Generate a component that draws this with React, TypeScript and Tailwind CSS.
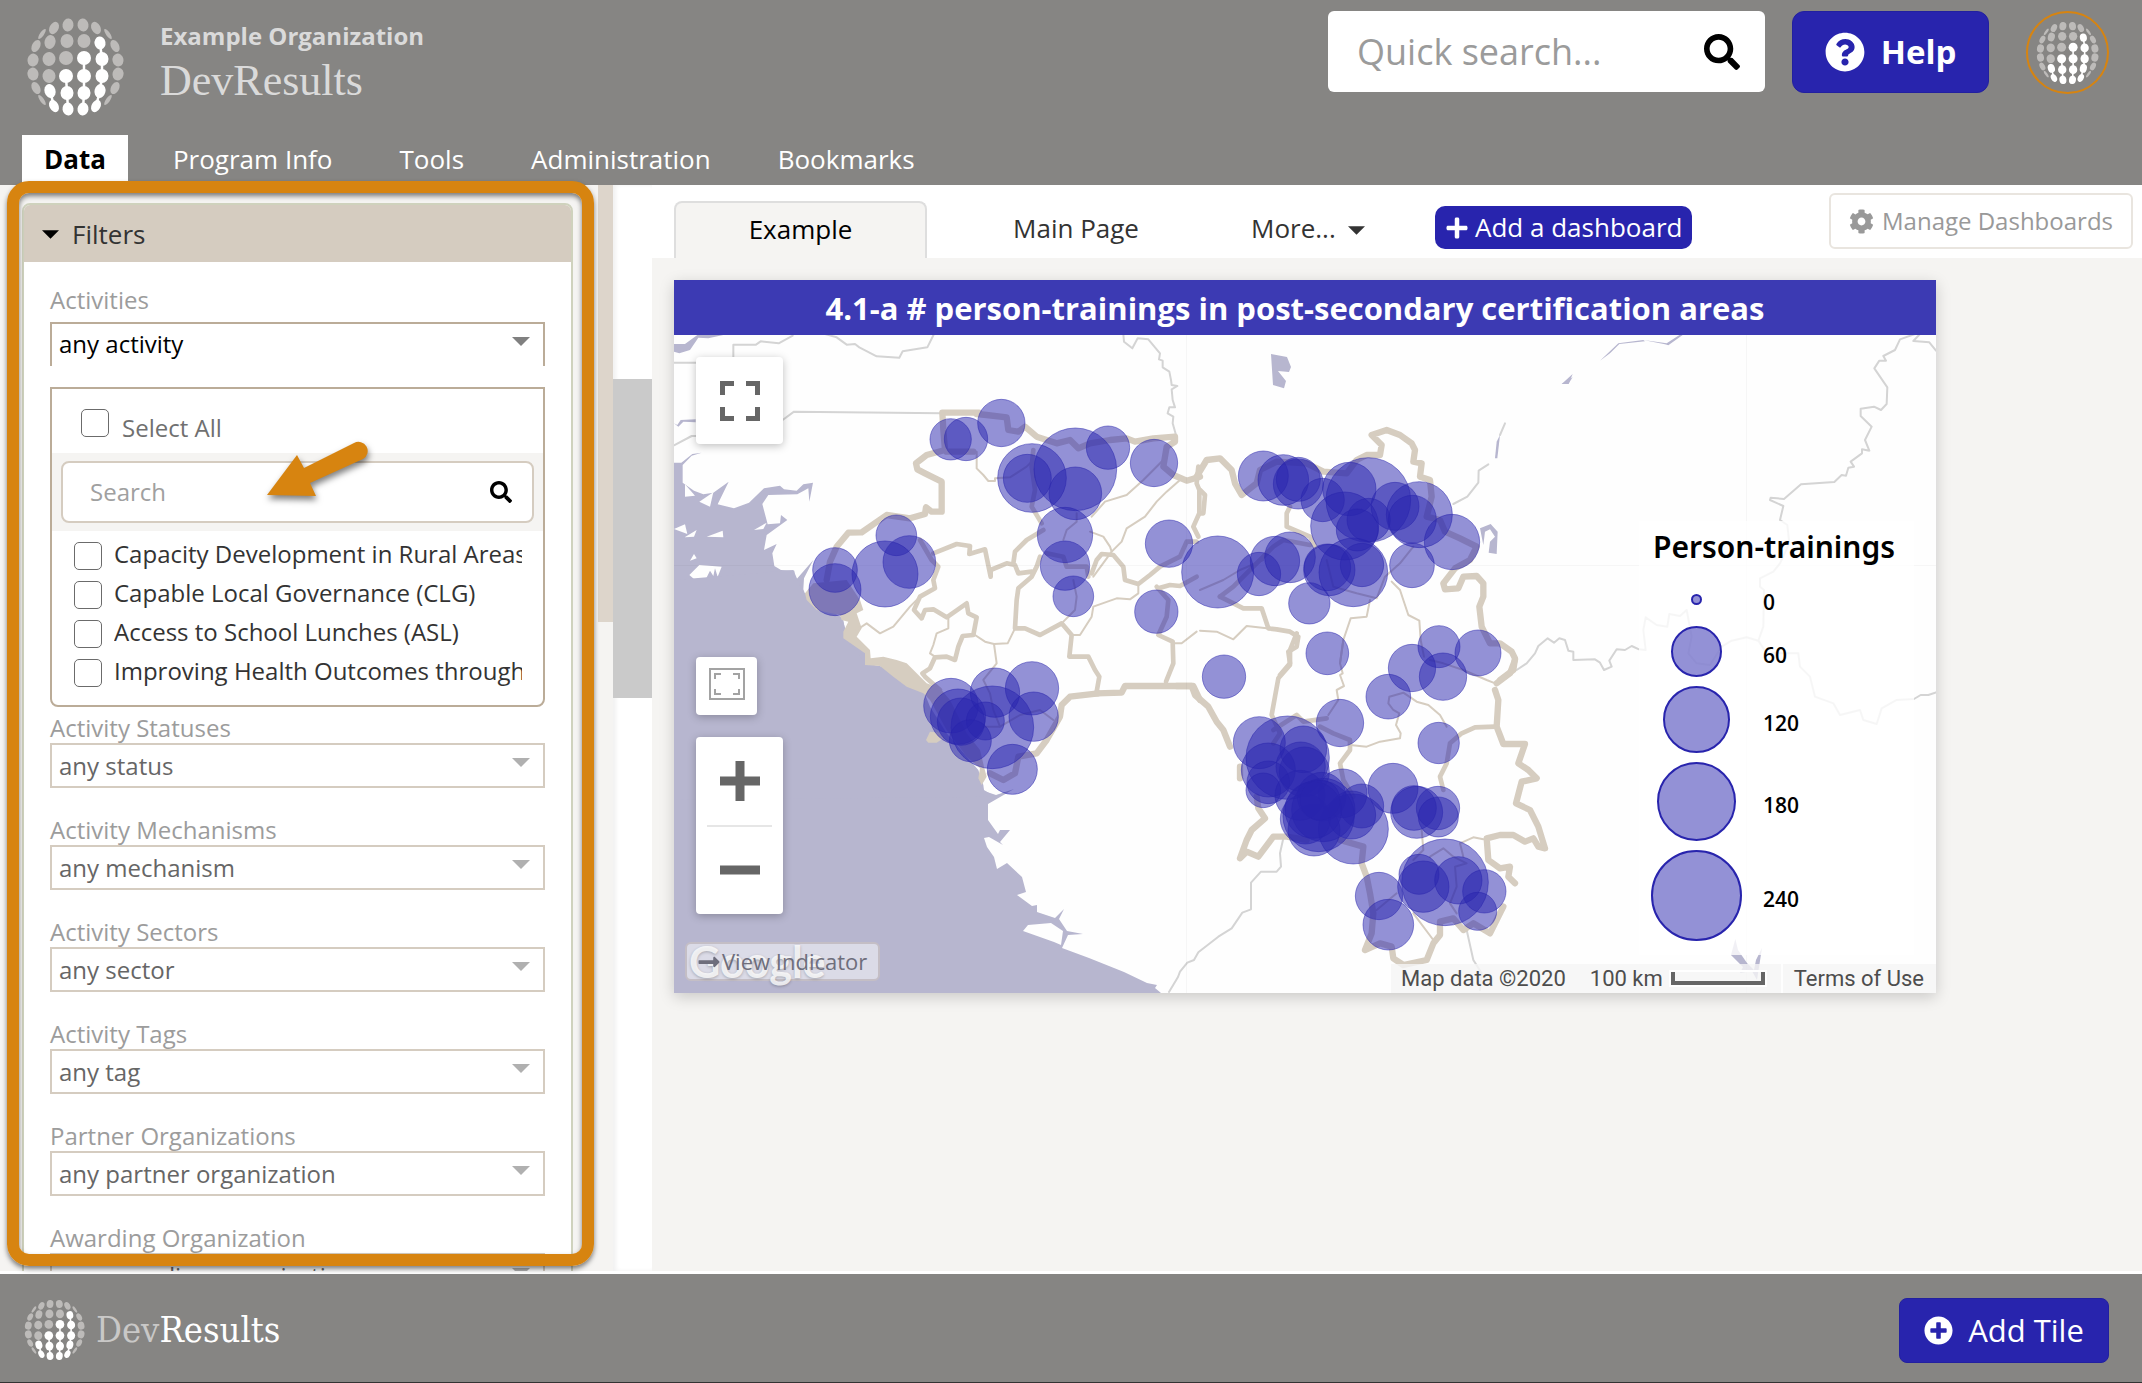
import React from "react";
import { FaCog, FaLongArrowAltRight, FaPlus, FaPlusCircle, FaQuestionCircle, FaSearch } from "react-icons/fa";

const sans = "font-['Open_Sans',sans-serif]";

/* ---------- Globe logo ---------- */

// cx, cy, rx, ry, rotation, highlighted
const globeDots: [number, number, number, number, number, boolean][] = [
    [16, 17, 2, 6, 35, false], [28, 11, 4.5, 6.5, 28, false], [42, 8, 5.5, 6.5, 8, false], [57, 8, 5.5, 6.5, -8, false], [70, 11, 4.5, 6.5, -28, false], [82, 17, 2, 6, -35, false],
    [10, 29, 4, 6.5, 28, false], [24, 25, 5.5, 7, 14, false], [41, 24, 6.5, 7, 0, false], [58, 24, 6.5, 7, 0, false], [74, 26, 5.5, 6.5, -10, true], [89, 29, 4, 6.5, -28, false],
    [7, 43, 5.5, 6.5, 12, false], [23, 42, 6.5, 7, 5, false], [40, 41, 7, 7, 0, false], [58, 41, 7, 7, 0, true], [76, 42, 6.5, 7, 0, true], [92, 43, 5.5, 6.5, -12, false],
    [7, 57, 5.5, 6.5, -12, false], [23, 59, 6.5, 7, -5, false], [40, 59, 7, 7, 0, true], [58, 59, 7, 7, 0, true], [76, 59, 6.5, 7, 0, true], [92, 57, 5.5, 6.5, 12, false],
    [10, 71, 4, 6.5, -28, false], [24, 74, 5.5, 7, -18, true], [41, 76, 6.5, 7, 0, true], [58, 76, 6.5, 7, 0, true], [74, 74, 5.5, 7, 14, true], [89, 71, 4, 6.5, 28, false],
    [16, 83, 2, 6, -35, false], [28, 89, 4.5, 6.5, -28, true], [42, 92, 5.5, 6.5, -8, true], [57, 92, 5.5, 6.5, 8, true], [70, 89, 4.5, 6.5, 28, true], [82, 83, 2, 6, 35, false],
];

const Globe: React.FC<{ className: string }> = ({ className }) => (
    <svg viewBox="0 0 100 100" className={className} aria-hidden="true">
        <path d="M24 74 L28 89 M40 59 L41 76 L42 92 M58 41 V76 L57 92 M74 26 L76 42 V59 L74 74 L70 89" stroke="#fff" strokeWidth="2.5" fill="none" />
        {globeDots.map(([cx, cy, rx, ry, rot, on], i) => (
            <ellipse key={i} cx={cx} cy={cy} rx={rx} ry={ry} transform={`rotate(${rot} ${cx} ${cy})`} fill={on ? "#fff" : "#bdbbb9"} />
        ))}
    </svg>
);

/* ---------- Map data ---------- */

interface Sheet {
    origin: [number, number];
    water?: string[];
    land?: string[];
    border?: string[];
    coast?: string[];
    thick?: string[];
    medium?: string[];
    thin?: string[];
    bubbles?: [number, number, number][];
}

// The map is split into sheets, each drawn at three units to the pixel
const sheets: Sheet[] = [
    {
        origin: [670, 330],
        water: [
            "12,398 34,398 67,372 95,368 65,377 38,405 38,458 72,482 100,493 130,488 176,455 143,523 192,535 237,518 282,475 330,467 342,478 380,482 400,463 429,458 418,515 415,475 382,493 295,495 277,522 293,583 330,580 333,555 352,570 290,615 282,660 320,642 307,670 313,708 333,720 373,722 375,753 430,690 402,745 400,778 420,830 515,860 530,910 590,970 600,1020 12,1020",
            "12,42 45,42 82,15 160,15 115,25 85,23 60,60 28,70 12,65",
            "12,280 22,285 32,270 77,268 77,277 40,275 25,290",
        ],
        land: [
            "45,463 75,497 45,500", "88,515 130,487 120,530", "12,597 45,583 52,612", "44,622 80,600 72,620",
            "110,620 158,602 160,622", "252,600 290,578 280,597", "60,692 72,672 80,685",
            "58,735 88,705 155,710 143,740 135,715 130,738 120,722 105,752 78,752",
        ],
        border: [
            "12,98 80,98", "190,82 190,44 258,44 272,34 326,40 368,17",
            "465,12 500,22 530,44 555,42 568,52 620,79 688,83 698,64 772,52 792,12",
            "12,346 65,318 80,318", "338,270 372,245 815,250",
            "1360,12 1362,35 1387,55 1403,25 1435,28 1470,70 1467,88 1478,92 1478,112 1498,125 1503,150 1505,165 1522,168 1505,178 1508,210 1515,232 1498,232 1493,250 1510,260 1508,280 1518,315",
        ],
    },
    {
        origin: [780, 380],
        water: ["-318,600 40,570 70,640 95,640 190,720 200,780 255,850 310,860 430,930 450,980 500,1060 560,1130 595,1170 610,1215 612,1230 645,1250 -318,1260"],
        coast: [
            "75,640 100,610 200,600 240,660 250,690 230,700 245,745 230,770 270,810 272,835 310,830 350,840 380,850 440,910 480,925 510,960 560,1060 600,1110 612,1160 620,1190 605,1215 595,1195 600,1165 560,1130 500,1050 450,960 430,940 380,920 340,890 300,858 255,855 255,820 190,775 190,755 205,725 185,720 180,705 110,690 80,660",
            "438,1080 450,1055 480,1058 490,1075 470,1088 445,1088",
        ],
        thick: [
            "597,98 487,98 490,150 495,210 440,225 408,250 412,268 435,280 485,305 485,395 455,395 438,382 435,402 390,415 320,405 245,457 205,458 170,500 150,545 140,600",
            "590,102 620,105 680,112 685,150 715,155 735,140 770,170 830,190 870,180 895,205 930,190 990,180 1040,175 1065,185 1120,175 1185,170 1185,185 1160,200 1150,260 1180,285 1220,302 1260,290",
            "500,215 580,215",
            "950,940 1025,938 1035,918 1240,918 1260,960",
            "955,940 870,950 845,975 840,1010 800,1080 770,1120 715,1130 705,1180 670,1200 630,1180",
        ],
        medium: [
            "760,210 755,260 765,330 755,380 785,430",
            "460,520 530,492 570,498 568,522 615,508 632,590 632,570 680,550 705,555 715,580 755,575",
            "700,550 705,515 740,480 790,450",
            "420,480 455,540 475,560 460,600 465,625 420,650 402,690 425,715 435,690 460,688 500,712 560,670 565,700 590,712 580,765 548,768 535,800 525,840 500,830 465,832 450,865 427,880 435,890 480,930",
            "780,530 770,560 755,590 715,625 710,660 705,745 735,745 780,765 845,730 875,765 868,830 925,830 945,870 958,890 950,935",
            "935,580 950,540 965,522 1000,525 1030,560 1035,600 1075,612 1110,585 1140,560 1200,530 1220,485 1250,485",
            "800,520 850,530 860,560 920,560 925,590",
            "1130,620 1165,660 1160,710 1135,765 1178,785 1180,850 1158,905",
            "1135,625 1170,615 1200,618 1250,590",
            "1255,260 1250,310 1258,330 1258,400 1240,440 1255,470",
        ],
        thin: [
            "590,215 590,265 610,285 625,303 645,303 645,295 690,292 740,260 760,240",
            "230,750 260,730 300,760 340,740 390,680 420,650",
            "505,712 505,745 470,760 460,795 450,820 465,830",
            "585,765 615,785 642,792 683,790 705,745",
            "642,792 650,850 610,900 630,940 640,990 660,1040 610,1040",
            "660,1040 720,1005 780,990 820,1020",
            "1200,300 1160,335 1130,365 1095,410 1040,445 1025,485 995,515 940,590",
            "935,410 975,365 1040,345 1090,300 1150,240",
            "930,455 970,470 990,500 995,515",
            "890,400 890,425 860,450 850,480",
            "1075,612 1075,640 1050,658 1010,655 940,680 935,710 900,765 880,765",
            "880,600 890,650 885,690 850,725",
            "1180,790 1205,790 1250,755",
        ],
        bubbles: [
            [512, 178, 62], [558, 177, 65], [664, 129, 71], [756, 294, 103], [742, 295, 72], [886, 268, 124], [886, 340, 79],
            [984, 203, 65], [1122, 249, 71], [855, 465, 83], [855, 557, 74], [880, 649, 61], [349, 466, 61], [388, 546, 79],
            [315, 582, 99], [165, 570, 67], [165, 629, 78], [1167, 491, 71], [1129, 695, 65], [513, 977, 82], [534, 1010, 83],
            [543, 1025, 71], [637, 1042, 124], [645, 938, 74], [756, 925, 80], [761, 1010, 74], [616, 1023, 57], [571, 1082, 63], [697, 1168, 75],
        ],
    },
    {
        origin: [1200, 380],
        water: [
            "840,445 872,432 893,455 890,522 866,518 870,485 885,470 870,448 855,455 850,495",
            "900,165 892,235 885,235 890,185", "1085,12 1118,-18 1106,12",
            "213,-78 261,-69 273,-39 267,-24 234,-27 258,3 252,25 219,15",
        ],
        border: ["915,130 900,165", "760,372 802,350 835,308 836,272 865,253"],
        thick: [
            "-10,290 20,240 60,235 95,270 105,310 125,345 170,310 180,270 230,245 320,250 370,275 440,280 470,240 500,225 540,225 545,195 515,165 560,150 600,165 635,190 645,210 640,245 665,250 660,290 690,300 695,350 680,410 720,420 735,455 780,475 830,500 810,540 765,565 730,610 735,628 775,625 790,590 830,588 850,610 850,650 838,680 845,740 870,790 900,790 935,815 945,835 940,870 900,900",
        ],
        medium: [
            "270,380 260,400 260,440 330,470 345,500", "0,330 15,345 10,400 0,400",
            "60,650 100,620 160,560 220,500 250,480 330,495",
            "60,650 130,685 185,685 205,745 230,748 270,755 295,770 290,800 265,815 270,850 240,885",
        ],
        thin: [
            "0,630 70,600 120,570 190,540", "0,752 50,755 100,778 140,738 200,745",
            "380,540 400,620 470,640 530,655 555,590 600,550 640,500",
            "510,660 500,710 452,715 430,780 420,850", "575,605 600,630 625,705 658,722 662,780 672,830",
        ],
        bubbles: [
            [53, 576, 108], [177, 582, 65], [225, 543, 74], [270, 532, 76], [190, 288, 75], [250, 300, 76], [295, 312, 75],
            [295, 298, 66], [368, 360, 65], [448, 327, 80], [505, 360, 127], [434, 438, 102], [506, 420, 65], [472, 450, 63],
            [585, 379, 72], [658, 404, 99], [637, 418, 72], [756, 486, 83], [636, 556, 67], [388, 570, 77], [382, 562, 70],
            [460, 577, 103], [486, 555, 65], [328, 670, 62], [382, 820, 64], [717, 800, 63], [834, 819, 69], [636, 864, 71],
            [729, 890, 71], [72, 890, 65], [565, 950, 67],
        ],
    },
    {
        origin: [1180, 600],
        border: [
            "310,715 300,760 303,800 290,815 243,815 213,848 213,928 187,938 155,985 115,1010 55,1057 42,1080 22,1088 0,1115 -6,1131 -33,1176",
            "860,990 880,1080 905,1120 900,1170",
        ],
        thick: [
            "-10,258 35,258 45,285 85,320 110,365 130,390 150,440", "180,500 180,535",
            "230,590 235,625 255,655 215,690 200,720 180,775 200,755 235,770 280,710 320,710 380,720",
            "1005,180 990,220 950,250",
            "945,270 955,300 950,380 970,432 1035,432 1015,490 1045,510 1070,535 1025,545 1008,610 1050,630 1075,680 1095,745 1075,740 1060,715 1035,725 1000,705 960,705 920,715 925,780 960,805 990,800 985,830 1005,850",
            "480,720 550,740 545,790 560,830 570,880 580,940 575,1000 555,1050 600,1030 635,1040 640,1075 670,1095 740,1080 760,1030 780,1005 780,965 820,955 850,990 880,970 930,1000 970,920",
        ],
        medium: [
            "350,100 330,150 330,195 295,235 285,290 275,345 300,400 280,430", "280,390 350,345 370,365 440,355",
            "420,380 460,400 510,420 510,450 480,490 490,540 520,590",
            "945,380 885,382 845,400 810,430 800,490 780,530 790,570",
        ],
        thin: [
            "490,120 480,190 488,220 480,225 492,258 470,270 475,300 445,345",
            "510,435 560,440 600,425 660,415 662,400 648,375 658,340 640,330 625,310 628,290 670,278 710,305 745,315 780,345 800,380",
            "750,180 790,190 850,210 920,240 940,248", "725,690 730,750 700,780", "840,730 880,712 910,718", "840,730 850,770",
            "750,770 790,745 820,770 860,790 825,800 830,860 810,910 830,940", "700,940 760,1020", "650,880 590,930",
        ],
        bubbles: [
            [480, 369, 71], [776, 429, 62], [238, 428, 78], [323, 473, 125], [370, 448, 70], [265, 510, 81], [265, 547, 64],
            [250, 571, 52], [373, 516, 75], [362, 500, 74], [360, 586, 75], [488, 580, 73], [425, 590, 73], [545, 618, 66],
            [520, 687, 105], [515, 645, 72], [416, 648, 107], [402, 690, 78], [376, 657, 75], [430, 630, 95], [400, 630, 85],
            [420, 600, 60], [639, 565, 75], [710, 637, 78], [702, 624, 67], [774, 624, 65], [775, 651, 60], [795, 847, 130],
            [717, 823, 60], [730, 860, 77], [835, 841, 71], [913, 874, 65], [893, 934, 57], [597, 888, 71], [625, 974, 76],
        ],
    },
    {
        origin: [1500, 330],
        water: [
            "300,92 355,40 430,30 435,34 358,42 330,70", "430,30 500,40 543,12 548,15 505,46 495,43", "185,162 218,142 206,160",
            "693,1875 706,1827 714,1860 741,1899 762,1920 768,1890 786,1854 771,1950 756,1923 720,1929 729,1911",
        ],
        border: [
            "1245,12 1200,28 1185,60 1150,78 1158,92 1138,92 1123,115 1162,172 1160,222 1143,240 1122,230 1082,236 1082,258 1115,290 1095,330 1108,362 1086,358 1086,370 1052,395 1062,410 1045,413 1038,437 1025,435 1003,456 903,463 852,507 812,503 810,510 850,528 840,570 862,585 868,640 840,700 820,725 780,745 780,770 792,780 790,890 775,932 740,922 695,932 665,950",
            "1260,12 1240,33 1288,37 1308,62",
            "50,1020 80,1000 105,970 115,948 143,925 162,938 178,925 195,930 205,962 220,965 220,990 285,988 300,998 312,1020 335,1010 328,992 350,958 375,960 395,948 417,958 437,960 430,900 437,862 470,885 502,890 508,852 540,858 560,840 575,920 565,970 590,1000 630,1005 665,950",
            "775,932 800,970 895,970 900,1010 930,1040 945,1100 1000,1120 1020,1155 1080,1140 1090,1170 1130,1182 1145,1135 1190,1110 1242,1107 1262,1095 1285,1095 1308,1087",
        ],
    },
];

const LINE_STYLES = [
    { key: "border", width: 6, color: "#d4d4d4" },
    { key: "thin", width: 6, color: "#d6cdc0" },
    { key: "medium", width: 14, color: "#d6cdc0" },
    { key: "thick", width: 19, color: "#d6cdc0" },
] as const;

const MapCanvas: React.FC = () => (
    <svg viewBox="674 335 1262 658" preserveAspectRatio="xMidYMid slice" className="block h-full w-full" role="img" aria-label="Map of person-trainings">
        <rect x="674" y="335" width="1262" height="658" fill="#fefefe" />
        {/* southern coastline */}
        <path
            fill="#b7b6cf"
            d="M674 720 H920 L946 740 L967 767 L982 786 L984 791 L996 795 L1014 789 L988 804 V820 L998 834 L1000 830 H1010 L1000 842 L1003 845 L989 837 L984 838 L987 847 L994 857 L997 869 L1007 863 L1022 877 L1026 892 L1017 895 L1032 906 L1037 905 L1037 912 L1055 918 L1064 909 L1059 919 L1067 931 L1083 934 L1068 935 L1062 948 L1089 958 L1124 972 L1147 983 L1157 985 L1155 988 L1161 993 H674 Z"
        />
        <path fill="#fefefe" d="M1023 931 L1028 925 L1051 923 L1063 931 L1061 945 L1054 942 Z" />
        {sheets.map((s, i) => (
            <g key={i} transform={`translate(${s.origin[0]} ${s.origin[1]}) scale(0.33333)`}>
                {s.water?.map((p) => <polygon key={p} points={p} fill="#b7b6cf" />)}
                {s.land?.map((p) => <polygon key={p} points={p} fill="#fefefe" />)}
                {s.coast?.map((p) => <polygon key={p} points={p} fill="#d6cdc0" />)}
            </g>
        ))}
        {LINE_STYLES.map(({ key, width, color }) =>
            sheets.map((s, i) => (
                <g key={key + i} transform={`translate(${s.origin[0]} ${s.origin[1]}) scale(0.33333)`} fill="none" stroke={color} strokeWidth={width} strokeLinejoin="round" strokeLinecap="round">
                    {s[key]?.map((p) => <polyline key={p} points={p} />)}
                </g>
            ))
        )}
        <path d="M674 565.5 H1936 M1186.5 335 V993 M1746.5 335 V993" stroke="#000" strokeOpacity="0.03" fill="none" />
        {sheets.map((s, i) => (
            <g key={i} transform={`translate(${s.origin[0]} ${s.origin[1]}) scale(0.33333)`} fill="#2824ad" fillOpacity="0.5" stroke="#2824ad" strokeOpacity="0.5" strokeWidth="3">
                {s.bubbles?.map(([x, y, r], j) => <circle key={j} cx={x} cy={y} r={r} />)}
            </g>
        ))}
    </svg>
);

/* ---------- Header ---------- */

const Header: React.FC = () => (
    <header className="flex h-[185px] shrink-0 flex-col justify-between bg-[#868583]">
        <div className="flex items-start justify-between pr-[33px]">
            <div className="flex pt-4 pl-[26px]">
                <Globe className="h-[102px] w-[100px]" />
                <div className="pl-[34px]">
                    <p className="pt-1 text-[24px] leading-8 font-bold text-[#dadada]">Example Organization</p>
                    <p className="font-['Liberation_Serif',serif] text-[44px] leading-[58px] text-[#dadada]">DevResults</p>
                </div>
            </div>
            <div className="flex items-start gap-[27px] pt-[11px]">
                <div className="flex h-[81px] w-[437px] items-center rounded-md bg-white pr-[25px] pl-[29px]">
                    <input type="text" aria-label="Quick search" placeholder="Quick search..." className="min-w-0 flex-1 text-[36px] placeholder:text-[#9b9b9b] focus:outline-none" />
                    <FaSearch className="size-9 text-black" />
                </div>
                <button type="button" className="flex h-[82px] w-[197px] items-center justify-center gap-4 rounded-xl border border-[#2220a0] bg-[#2824ad] text-[33px] font-bold text-white">
                    <FaQuestionCircle className="size-10" />
                    Help
                </button>
                <a href="#profile" aria-label="Profile" className="ml-[10px] flex size-[83px] items-center justify-center rounded-full border-2 border-[#d78410]">
                    <Globe className="size-[64px]" />
                </a>
            </div>
        </div>
        <nav className="flex gap-[23px] pl-[22px] text-[26px] text-white">
            <a href="#data" className="flex h-[50px] items-center bg-white px-[22px] pb-[2px] font-bold text-black">Data</a>
            {["Program Info", "Tools", "Administration", "Bookmarks"].map((item) => (
                <a key={item} href="#nav" className="flex h-[50px] items-center px-[22px] pb-[2px]">{item}</a>
            ))}
        </nav>
    </header>
);

/* ---------- Filters ---------- */

const activities = [
    "Capacity Development in Rural Areas",
    "Capable Local Governance (CLG)",
    "Access to School Lunches (ASL)",
    "Improving Health Outcomes through Education",
];

const filters = [
    { label: "Activity Statuses", value: "any status" },
    { label: "Activity Mechanisms", value: "any mechanism" },
    { label: "Activity Sectors", value: "any sector" },
    { label: "Activity Tags", value: "any tag" },
    { label: "Partner Organizations", value: "any partner organization" },
    { label: "Awarding Organization", value: "any awarding organization" },
];

const Checkbox: React.FC<{ id: string }> = ({ id }) => (
    <input id={id} type="checkbox" className="size-7 shrink-0 appearance-none rounded-[5px] border border-[#6b6b6b] bg-white" />
);

const Caret: React.FC = () => (
    <svg viewBox="0 0 18 9" className="pointer-events-none absolute top-[15px] right-[15px] h-[9px] w-[18px] fill-current" aria-hidden="true">
        <path d="M0 0 H18 L9 9 Z" />
    </svg>
);

const FilterSelect: React.FC<{ id: string; value: string }> = ({ id, value }) => (
    <div className="relative text-[#b0b0b0]">
        <select id={id} className="h-[45px] w-full appearance-none border-2 border-[#d5ccc0] bg-white px-[7px] text-[24px] text-[#666]">
            <option>{value}</option>
        </select>
        <Caret />
    </div>
);

const ActivityMenu: React.FC = () => (
    <div className="mt-[21px] rounded-b-lg border-2 border-[#bbac98] pb-[13px]">
        <div className="flex h-16 items-center gap-[13px] pt-1 pl-[29px]">
            <Checkbox id="select-all" />
            <label htmlFor="select-all" className="pt-[10px] text-[24px] text-[#707070]">Select All</label>
        </div>
        <div className="bg-[#f5f4f2] px-[9px] py-2">
            <div className="flex h-[62px] items-center rounded-lg border-2 border-[#d5ccc0] bg-white pr-5 pl-[27px]">
                <input type="text" aria-label="Search activities" placeholder="Search" className="min-w-0 flex-1 text-[24px] placeholder:text-[#a0a0a0] focus:outline-none" />
                <FaSearch className="size-[22px] text-black" />
            </div>
        </div>
        <ul className="pt-[5px] pr-[21px] pl-[22px]">
            {activities.map((name, i) => (
                <li key={name} className="flex h-[39px] items-center gap-3">
                    <Checkbox id={`activity-${i}`} />
                    <label htmlFor={`activity-${i}`} className="overflow-hidden pb-1 text-[24px] leading-8 whitespace-nowrap text-[#333]">{name}</label>
                </li>
            ))}
        </ul>
    </div>
);

const Sidebar: React.FC = () => (
    <aside className="relative flex w-[652px] shrink-0">
        <div className="h-full w-[598px] overflow-hidden bg-[#f5f4f2] pt-[18px] pr-[25px] pl-[22px]">
            <div className="overflow-hidden rounded-t-lg border-2 border-[#cfd2bd] bg-white">
                <h2 className="flex h-[57px] items-center gap-[13px] bg-[#d5ccc0] pt-[2px] pl-[18px] text-[26px] text-[#333]">
                    <svg viewBox="0 0 18 9" className="h-[9px] w-[17px] fill-black" aria-hidden="true"><path d="M0 0 H18 L9 9 Z" /></svg>
                    Filters
                </h2>
                <div className="px-[26px] pt-[23px]">
                    <label htmlFor="activities" className="block pb-[7px] text-[24px] leading-[30px] text-[#9c9c9c]">Activities</label>
                    <div className="relative text-[#808080]">
                        <select id="activities" className="h-11 w-full appearance-none border-2 border-b-0 border-[#bbac98] bg-white px-[7px] pb-[2px] text-[24px] text-black">
                            <option>any activity</option>
                        </select>
                        <Caret />
                    </div>
                    <ActivityMenu />
                    <div className="flex flex-col gap-[27px] pt-[6px]">
                        {filters.map(({ label, value }) => (
                            <div key={label}>
                                <label htmlFor={label} className="block text-[24px] leading-[30px] text-[#9c9c9c]">{label}</label>
                                <FilterSelect id={label} value={value} />
                            </div>
                        ))}
                    </div>
                </div>
            </div>
        </div>
        {/* inner scrollbar */}
        <div className="w-[15px] bg-[#f5f4f2]">
            <div className="h-[437px] bg-[#ddd5cb]" />
        </div>
        {/* outer scrollbar */}
        <div className="flex-1 pt-[194px] shadow-[inset_3px_0_4px_rgba(0,0,0,0.06)]">
            <div className="h-[319px] bg-[#cacaca]" />
        </div>
        {/* callout frame and arrow */}
        <div className="pointer-events-none absolute -top-1 bottom-[5px] left-[7px] w-[587px] rounded-[22px] border-12 border-[#d78410] shadow-[0_3px_5px_rgba(0,0,0,0.5),inset_0_3px_5px_rgba(0,0,0,0.5)]" />
        <svg viewBox="260 430 120 80" className="pointer-events-none absolute top-[245px] left-[260px] h-20 w-[120px] drop-shadow-[1px_4px_3px_rgba(0,0,0,0.5)]" aria-hidden="true">
            <path d="M267 495 L297 455 L304 468 L354 443 A9 9 0 0 1 363 459 L310 483 L316 496 Z" fill="#d78410" />
        </svg>
    </aside>
);

/* ---------- Dashboard ---------- */

const DashboardTabs: React.FC = () => (
    <div className="flex h-[73px] items-start bg-white pr-[9px] pl-[22px] text-[26px] text-[#333]">
        <div className="flex flex-1 items-end gap-3 pt-4">
            <a href="#example" className="flex h-[57px] w-[253px] items-center justify-center rounded-t-lg border-2 border-b-0 border-[#dedede] bg-[#f5f4f2] pb-[2px] text-black">Example</a>
            <a href="#main" className="flex h-[57px] w-[274px] items-center justify-center pb-[2px]">Main Page</a>
            <button type="button" className="flex h-[57px] w-[198px] items-center gap-3 pb-[2px] pl-[26px]">
                More...
                <svg viewBox="0 0 18 9" className="mt-1 h-[9px] w-[17px] fill-[#333]" aria-hidden="true"><path d="M0 0 H18 L9 9 Z" /></svg>
            </button>
            <button type="button" className="mb-[9px] flex h-[43px] items-center gap-[6px] rounded-[10px] bg-[#2824ad] px-[10px] text-white">
                <FaPlus className="size-6" />
                Add a dashboard
            </button>
        </div>
        <button type="button" className="mt-2 flex h-14 items-center gap-2 rounded-md border-2 border-[#e9e5df] px-[18px] text-[24px] text-[#999]">
            <FaCog className="size-[25px]" />
            Manage Dashboards
        </button>
    </div>
);

const legend = [
    { value: 0, dot: "size-[11px]", row: "h-9" },
    { value: 60, dot: "size-[51px]", row: "" },
    { value: 120, dot: "size-[67px]", row: "" },
    { value: 180, dot: "size-[79px]", row: "" },
    { value: 240, dot: "size-[91px]", row: "" },
];

const Legend: React.FC = () => (
    <div className="absolute top-[186px] right-[22px] h-[434px] w-[275px] bg-white/80">
        <h3 className="pt-2 pl-[14px] font-['Noto_Sans',sans-serif] text-[30px] leading-[36px] font-semibold text-black">Person-trainings</h3>
        <ul className="flex flex-col gap-[9px] pt-4">
            {legend.map(({ value, dot, row }) => (
                <li key={value} className={`flex items-center ${row}`}>
                    <span className="flex w-[114px] justify-center">
                        <span className={`rounded-full border-2 border-[#2824ad] bg-[#2824ad]/50 ${dot}`} />
                    </span>
                    <span className="pt-[6px] pl-[10px] text-[21px] leading-7 font-semibold text-black">{value}</span>
                </li>
            ))}
        </ul>
    </div>
);

const mapButton = "flex items-center justify-center rounded bg-white shadow-[0_2px_8px_rgba(0,0,0,0.25)]";

const MapControls: React.FC = () => (
    <>
        <button type="button" aria-label="Full screen" className={`${mapButton} absolute top-[22px] left-[22px] size-[87px]`}>
            <svg viewBox="0 0 40 40" className="size-10" fill="none" stroke="#666" strokeWidth="5">
                <path d="M2.5 14 V2.5 H14 M26 2.5 H37.5 V14 M37.5 26 V37.5 H26 M14 37.5 H2.5 V26" />
            </svg>
        </button>
        <div className="absolute bottom-[79px] left-[22px] flex flex-col items-start gap-[22px]">
            <button type="button" aria-label="Fit to data" className={`${mapButton} h-[58px] w-[61px] pb-1`}>
                <svg viewBox="0 0 36 32" className="h-8 w-9" fill="none" stroke="#a3a3a3" strokeWidth="2">
                    <path d="M1 1 H35 V31 H1 Z M6 11 V6 H12 M24 6 H30 V11 M30 21 V26 H24 M12 26 H6 V21" />
                </svg>
            </button>
            <div className={`${mapButton} h-[177px] w-[87px] flex-col`}>
                <button type="button" aria-label="Zoom in" className="flex w-[65px] flex-1 items-center justify-center border-b-2 border-[#e6e6e6]">
                    <svg viewBox="0 0 40 40" className="size-10" stroke="#666" strokeWidth="9"><path d="M0 20 H40 M20 0 V40" /></svg>
                </button>
                <button type="button" aria-label="Zoom out" className="flex w-[65px] flex-1 items-center justify-center">
                    <svg viewBox="0 0 40 40" className="size-10" stroke="#666" strokeWidth="9"><path d="M0 20 H40" /></svg>
                </button>
            </div>
        </div>
        <div className="absolute bottom-3 left-[11px] h-[39px]">
            <button type="button" className="flex h-[39px] items-center gap-[2px] rounded-md border-2 border-[#c4bec5] bg-white/50 px-[11px] text-[22px] text-[#6e6e7c]">
                <FaLongArrowAltRight className="relative z-10 h-6 w-[22px]" />
                <span className="relative z-10">View Indicator</span>
            </button>
            <span className="absolute top-0 left-1 font-['Lato',sans-serif] text-[43px] leading-[39px] font-bold text-white/80 text-shadow-[0_1px_3px_rgba(0,0,0,0.25)]">Google</span>
        </div>
        <div className="absolute right-0 bottom-0 flex h-[29px] items-center font-['Roboto',sans-serif] text-[22px] text-[#4d4d4d]">
            <div className="flex h-full items-center gap-6 bg-[#f5f5f5]/80 px-[10px] pr-4">
                <span>Map data ©2020</span>
                <span className="flex items-center gap-2">
                    100 km
                    <span className="h-[13px] w-[94px] border-4 border-t-0 border-[#666] outline-2 outline-white" />
                </span>
            </div>
            <a href="#terms" className="ml-[2px] flex h-full items-center bg-[#f5f5f5]/80 pr-3 pl-[11px]">Terms of Use</a>
        </div>
    </>
);

const Dashboard: React.FC = () => (
    <main className="min-w-0 flex-1 bg-[#f5f4f2]">
        <DashboardTabs />
        <div className="p-[22px]">
            <section className="max-w-[1262px] shadow-[0_4px_14px_rgba(0,0,0,0.18)]">
                <h1 className="flex h-[55px] items-center justify-center bg-[#3c3ab3] pt-[2px] pr-5 text-[31px] font-bold text-white">
                    4.1-a # person-trainings in post-secondary certification areas
                </h1>
                <div className="relative h-[658px] overflow-hidden">
                    <MapCanvas />
                    <Legend />
                    <MapControls />
                </div>
            </section>
        </div>
    </main>
);

/* ---------- Footer ---------- */

const Footer: React.FC = () => (
    <footer className="flex h-[109px] shrink-0 items-center justify-between border-b border-[#333] bg-[#868583] pt-1 pr-[33px] pl-6">
        <div className="flex items-center gap-[10px]">
            <Globe className="size-[62px]" />
            <span className="font-['DejaVu_Serif_Condensed','DejaVu_Serif',serif] text-[36px] text-[#c9c8c7]">
                Dev<span className="text-white">Results</span>
            </span>
        </div>
        <button type="button" className="flex h-[65px] w-[210px] items-center justify-center gap-[15px] rounded-lg border border-[#2220a0] bg-[#2824ad] text-[31px] text-white">
            <FaPlusCircle className="size-[29px]" />
            Add Tile
        </button>
    </footer>
);

const App: React.FC = () => {
    return (
        <div className={`flex h-screen flex-col bg-white ${sans}`}>
            <Header />
            <div className="mb-[3px] flex min-h-0 flex-1">
                <Sidebar />
                <Dashboard />
            </div>
            <Footer />
        </div>
    );
};

export default App;
